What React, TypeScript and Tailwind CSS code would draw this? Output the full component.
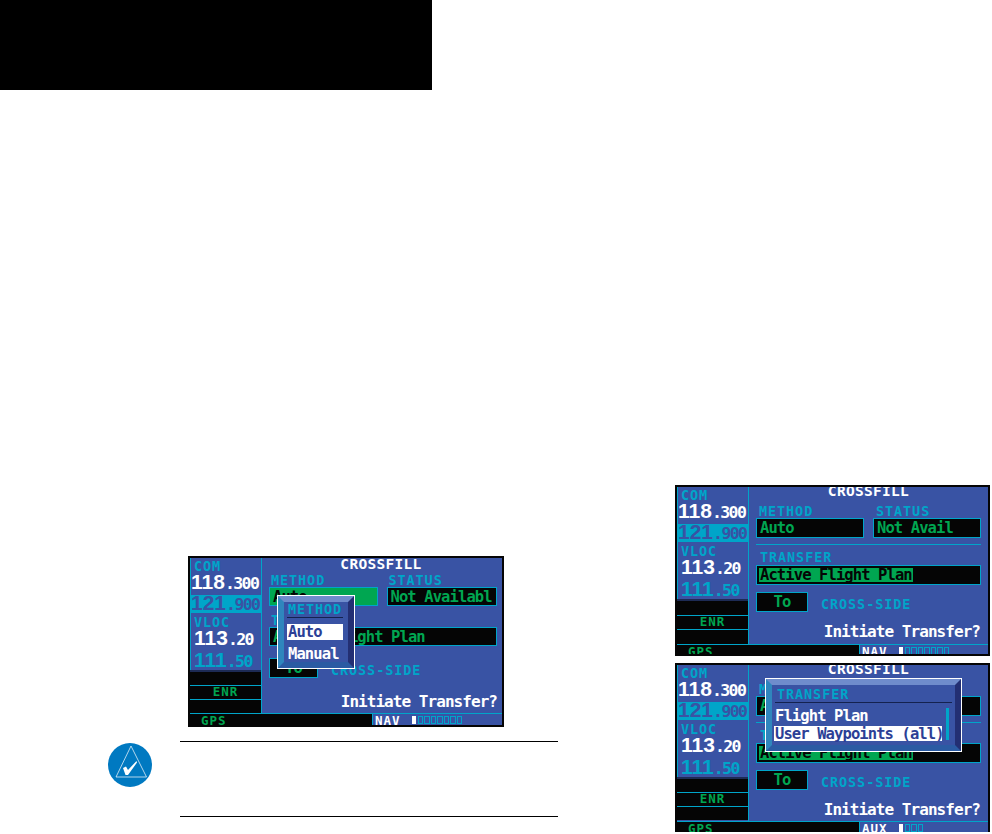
const CYAN = 'text-[#00a5c9]';
const mono = "font-['DejaVu_Sans_Mono',monospace] font-bold";

function Label({ children, className = '' }: { children: string; className?: string }) {
  return (
    <div className={`${mono} ${CYAN} text-[13.5px] leading-[10px] tracking-[0.9px] whitespace-nowrap ${className}`}>{children}</div>
  );
}

function Big({ children, className = '' }: { children: string; className?: string }) {
  return <span className={`${mono} text-[15.5px] leading-[14px] tracking-[-0.9px] whitespace-nowrap ${className}`}>{children}</span>;
}

function Prompt() {
  return (
    <span className={`${mono} text-white text-[16px] leading-[14px] tracking-[-0.95px] whitespace-nowrap`}>Initiate Transfer?</span>
  );
}

function Freq({ main, rest, color }: { main: string; rest: string; color: string }) {
  return (
    <div className={`${color} flex items-baseline leading-[16px] whitespace-nowrap`}>
      <span className="font-['Liberation_Sans',sans-serif] font-bold text-[21px]">{main}</span>
      <span className={`${mono} text-[16.5px] tracking-[-1.6px]`}>{rest}</span>
    </div>
  );
}

function Field({ text, className = '', selected = false }: { text?: string; className?: string; selected?: boolean }) {
  return (
    <div className={`border border-[#00a5c9] bg-[#050505] flex items-center pl-[2px] overflow-hidden ${className}`}>
      {text && (
        <Big className={selected ? 'bg-[#00a651] text-[#050505] px-[1px]' : 'text-[#00a651] px-[1px]'}>{text}</Big>
      )}
    </div>
  );
}

function Popup({ className, innerClass, children }: { className: string; innerClass: string; children: React.ReactNode }) {
  return (
    <div className={`absolute border border-white ${className}`}>
      <div className={`h-full border-[6px] border-t-[#6f8ccc] border-l-[#2f86bd] border-r-[#232f73] border-b-[#2b5ba3] bg-[#3953a4] ${innerClass}`}>
        {children}
      </div>
    </div>
  );
}

function ComColumn({ rowsClass }: { rowsClass: string }) {
  return (
    <div className="w-[72px] shrink-0 flex flex-col border-r border-[#00a5c9]">
      <div className="h-[55px] border-l border-b-[2px] border-[#00a5c9] pt-[3px] flex flex-col">
        <Label className="pl-[3px]">COM</Label>
        <div className="mt-[3px]">
          <Freq main="118" rest=".300" color="text-white" />
        </div>
        <div className="bg-[#00a5c9] h-[19px] mt-[3px] flex items-center">
          <Freq main="121" rest=".900" color="text-[#3953a4]" />
        </div>
      </div>
      <div className="h-[57px] border-l border-[#00a5c9] pt-[4px] flex flex-col">
        <Label className="pl-[3px]">VLOC</Label>
        <div className="pl-[3px] mt-[3px]">
          <Freq main="113" rest=".20" color="text-white" />
        </div>
        <div className="pl-[3px] mt-[4px]">
          <Freq main="111" rest=".50" color="text-[#00a5c9]" />
        </div>
      </div>
      <div className={`flex flex-col bg-[#050505] border-t-[2px] border-[#1d2b55] ${rowsClass}`}>
        <div className="flex-1 border-b border-[#00a5c9]" />
        <div className="flex-1 border-b border-[#00a5c9] flex items-center justify-center">
          <span className={`${mono} text-[#00a651] text-[12.5px] leading-none tracking-[1px]`}>ENR</span>
        </div>
        <div className="flex-1" />
      </div>
    </div>
  );
}

function StatusBar({ mode, squares, className }: { mode: string; squares: number; className: string }) {
  return (
    <div className={`flex border-t border-[#00a5c9] overflow-hidden ${className}`}>
      <div className="w-[182px] bg-[#050505] pl-[11px] pt-[1px]">
        <span className={`${mono} text-[#00a651] text-[12.5px] leading-none tracking-[1px] block`}>GPS</span>
      </div>
      <div className="flex-1 border-l border-[#00a5c9] flex items-start pt-[1px] pl-[2px]">
        <span className={`${mono} text-white text-[12.5px] leading-none tracking-[1px] block`}>{mode}</span>
        <span className="w-[4px] h-[8px] bg-white ml-[11px] mt-[1px]" />
        <span className="flex gap-[1px] ml-[2px] mt-[1px]">
          {Array.from({ length: squares }).map((_, i) => (
            <span key={i} className="w-[5.5px] h-[8px] border border-[#00a5c9]" />
          ))}
        </span>
      </div>
    </div>
  );
}

function Screen({ className, rowsClass, statusClass, mode, squares, children }: {
  className: string;
  rowsClass: string;
  statusClass: string;
  mode: string;
  squares: number;
  children: React.ReactNode;
}) {
  return (
    <div className={`relative border-[2px] border-[#050505] bg-[#3953a4] flex flex-col overflow-hidden ${className}`}>
      <div className="flex flex-1 min-h-0">
        <ComColumn rowsClass={rowsClass} />
        {children}
      </div>
      <StatusBar mode={mode} squares={squares} className={statusClass} />
    </div>
  );
}

// the pane of the second and third screens, the fields sit a little lower than in the first
function CrossfillPane() {
  return (
    <div className="flex-1 flex flex-col relative min-w-0 px-[7px]">
      <div className={`${mono} text-white text-[14.5px] leading-[10px] text-center -mt-[1px] tracking-[0.3px]`}>CROSSFILL</div>
      <div className="flex gap-[9px] mt-[10px]">
        <div className="w-[109px]">
          <Label className="pl-[3px]">METHOD</Label>
          <Field text="Auto" className="h-[20px] mt-[2px]" />
        </div>
        <div className="w-[109px]">
          <Label className="pl-[3px]">STATUS</Label>
          <Field text="Not Avail" className="h-[20px] mt-[2px]" />
        </div>
      </div>
      <div className="h-[1px] bg-[#00a5c9] mt-[6px]" />
      <Label className="pl-[4px] mt-[7px]">TRANSFER</Label>
      <Field text="Active Flight Plan" selected className="h-[20px] mt-[3px]" />
      <div className="flex items-center gap-[13px] mt-[7px]">
        <div className="w-[52px] h-[20px] border border-[#00a5c9] bg-[#050505] flex items-center justify-center">
          <Big className="text-[#00a651]">To</Big>
        </div>
        <Label className="mt-[4px]">CROSS-SIDE</Label>
      </div>
      <div className="text-right mt-[7px] pr-[1px]">
        <Prompt />
      </div>
    </div>
  );
}

export default function App() {
  return (
    <div className="w-[992px] h-[834px] bg-white overflow-hidden">
      <div className="w-[432px] h-[90px] bg-black" />
      <div className="flex">
        <div className="w-[675px] shrink-0 pt-[466px] pl-[108px]">
          <Screen className="ml-[80px] w-[316px] h-[171px]" rowsClass="h-[44px]" statusClass="h-[12px]" mode="NAV" squares={7}>
            <div className="flex-1 flex flex-col min-w-0 pl-[7px] pr-[5px]">
              <div className={`${mono} text-white text-[14.5px] leading-[10px] text-center mt-[1px] pr-[4px] tracking-[0.3px]`}>CROSSFILL</div>
              <div className="flex gap-[9px] mt-[6px]">
                <div className="w-[109px]">
                  <Label className="pl-[2px]">METHOD</Label>
                  <div className="h-[19px] mt-[2px] border border-[#00a5c9] bg-[#00a651] pl-[3px] flex items-center">
                    <Big className="text-[#050505]">Auto</Big>
                  </div>
                </div>
                <div className="w-[111px]">
                  <Label className="pl-[2px]">STATUS</Label>
                  <Field text="Not Availabl" className="h-[19px] mt-[2px]" />
                </div>
              </div>
              <Label className="pl-[2px] mt-[9px]">TRANSFER</Label>
              <Field text="Active Flight Plan" className="h-[20px] mt-[2px]" />
              <div className="flex items-center gap-[13px] mt-[12px]">
                <div className="w-[49px] h-[20px] border border-[#00a5c9] bg-[#050505] flex items-center justify-center">
                  <Big className="text-[#00a651]">To</Big>
                </div>
                <Label className="mt-[4px]">CROSS-SIDE</Label>
              </div>
              <div className="text-right mt-[11px]">
                <Prompt />
              </div>
            </div>
            <Popup className="left-[87px] top-[37px] w-[78px] h-[74px]" innerClass="pl-[3px] pr-[5px] pt-[2px]">
              <Label className="text-center">METHOD</Label>
              <div className="h-[1px] bg-[#14224f] mt-[3px]" />
              <div className="bg-white h-[16px] mt-[6px] pl-[1px] flex items-center">
                <Big className="text-[#2c3f96]">Auto</Big>
              </div>
              <div className="h-[16px] mt-[6px] pl-[1px] flex items-center">
                <Big className="text-white">Manual</Big>
              </div>
            </Popup>
          </Screen>
          <div className="flex mt-[14px] gap-[28px]">
            <svg className="mt-[2px] shrink-0" width="44" height="44" viewBox="0 0 44 44">
              <circle cx="22" cy="22" r="22" fill="#0079c1" />
              <path d="M23 3 L38.5 34 L8 34 Z" fill="none" stroke="#fff" strokeWidth="0.7" />
              <path d="M15 25 L18 23.5 L20 27 L28.5 18 L29 19.5 L20 32 L17.5 32 Z" fill="#fff" />
            </svg>
            <div className="w-[378px] h-[76px] border-y-[1.5px] border-black" />
          </div>
        </div>
        <div className="flex-1 pt-[395px] flex flex-col gap-[7px]">
          <Screen className="w-[315px] h-[171px]" rowsClass="h-[45px]" statusClass="h-[10px]" mode="NAV" squares={7}>
            <CrossfillPane />
          </Screen>
          <Screen className="w-[315px] h-[169px] !border-b-0" rowsClass="h-[43px]" statusClass="h-[11px]" mode="AUX" squares={3}>
            <CrossfillPane />
            <Popup className="left-[88px] top-[13px] w-[197px] h-[74px]" innerClass="px-[3px] pt-[4px]">
              <Label className="pl-[2px]">TRANSFER</Label>
              <div className="h-[1px] bg-[#14224f] mt-[3px] w-[177px]" />
              <div className="flex">
                <div className="w-[168px] shrink-0 -ml-[1px]">
                  <div className="h-[15px] mt-[5px] pl-[1px] flex items-center">
                    <Big className="text-white">Flight Plan</Big>
                  </div>
                  <div className="bg-white h-[15px] mt-[3px] pl-[1px] flex items-center">
                    <Big className="text-[#2c3f96]">User Waypoints (all)</Big>
                  </div>
                </div>
                <div className="w-[3px] h-[32px] ml-[4px] mt-[5px] bg-[#00a5c9]" />
              </div>
            </Popup>
          </Screen>
        </div>
      </div>
    </div>
  );
}
